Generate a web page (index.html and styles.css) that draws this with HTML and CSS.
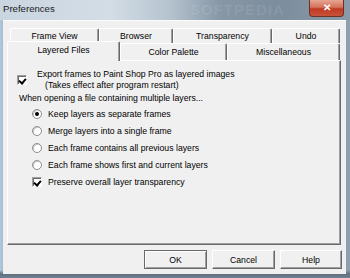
FILE: index.html
```html
<!DOCTYPE html>
<html lang="en">

<head>
	<meta charset="UTF-8">
	<title>Preferences</title>
	<link rel="stylesheet" href="styles.css">
</head>

<body>
	<div class="window">
		<div class="titlebar">
			<span class="title">Preferences</span>
			<span class="title-mark">SOFTPEDIA</span>
			<div class="close">&#x2715;</div>
		</div>
		<div class="client">
			<div class="tabs">
				<div class="tab-row back">
					<div class="tab w-frame">Frame View</div>
					<div class="tab w-browser">Browser</div>
					<div class="tab w-transp">Transparency</div>
					<div class="tab w-undo">Undo</div>
				</div>
				<div class="tab-row front">
					<div class="tab active w-layered">Layered Files</div>
					<div class="tab w-palette">Color Palette</div>
					<div class="tab w-misc">Miscellaneous</div>
				</div>
			</div>
			<div class="panel">
				<div class="export">
					<span class="check checked"></span>
					<div class="export-text">
						<div>Export frames to Paint Shop Pro as layered images</div>
						<div class="sub">(Takes effect after program restart)</div>
					</div>
				</div>
				<div class="caption">When opening a file containing multiple layers...</div>
				<div class="option"><span class="radio selected"></span>Keep layers as separate frames</div>
				<div class="option"><span class="radio"></span>Merge layers into a single frame</div>
				<div class="option"><span class="radio"></span>Each frame contains all previous layers</div>
				<div class="option"><span class="radio"></span>Each frame shows first and current layers</div>
				<div class="option"><span class="check checked"></span>Preserve overall layer transparency</div>
			</div>
			<div class="buttons">
				<div class="btn default">OK</div>
				<div class="btn">Cancel</div>
				<div class="btn narrow">Help</div>
			</div>
		</div>
	</div>
</body>

</html>
```

FILE: styles.css
```css
/* Base reset */
* {
	margin: 0;
	padding: 0;
	box-sizing: border-box;
}

body {
	width: 350px;
	height: 278px;
	overflow: hidden;
	font-family: 'Liberation Sans', Arial, sans-serif;
	font-size: 8.7px;
	color: #000;
	background: linear-gradient(90deg, #b4c8db 0, #a7bccf 3px, #7f91a2 60%, #8d9fb1 100%);
}

.window {
	height: 278px;
	padding: 0 4px 4px 3px;
	background: linear-gradient(180deg, transparent 270px, #5f6f7e 274px, #6f8090 278px);
}

/* Title bar */
.titlebar {
	position: relative;
	height: 20px;
	margin: 0 -4px 0 -3px;
	padding-left: 3px;
	display: flex;
	align-items: center;
	background: linear-gradient(90deg, #c9d5e0 0, #d3dde6 110px, #b5c3cf 170px, #8797a6 220px, #7c8d9d 280px, #8a9aa9 350px);
}

.title {
	font-size: 9.6px;
	color: #1b1b1b;
	margin-top: -3px;
}

.title-mark {
	position: absolute;
	left: 190px;
	top: 1px;
	font-size: 15px;
	font-weight: bold;
	letter-spacing: 1px;
	color: rgba(255, 255, 255, 0.09);
}

.close {
	position: absolute;
	right: 6px;
	top: 0;
	width: 35px;
	height: 17px;
	border: 1px solid #6e3128;
	border-top: none;
	border-radius: 0 0 4px 4px;
	background: linear-gradient(180deg, #e7a593 0, #d4725c 45%, #c13b22 55%, #c9523a 100%);
	color: #fff;
	font-size: 10px;
	font-weight: bold;
	text-align: center;
	line-height: 15px;
}

/* Client area */
.client {
	height: 254px;
	background: #f0f0f0;
	border-top: 1px solid #fdfdfd;
	padding: 7px 5px 0 4px;
}

.tabs {
	height: 32px;
}

.tab-row {
	display: flex;
}

.tab-row.back {
	height: 15px;
	margin-left: 3px;
}

.tab-row.front {
	height: 17px;
}

.tab {
	height: 100%;
	border-top: 1px solid #fff;
	border-left: 1px solid #fff;
	border-right: 1px solid #696969;
	border-radius: 2px 2px 0 0;
	box-shadow: inset -1px 0 #a0a0a0;
	background: #f0f0f0;
	display: flex;
	align-items: center;
	justify-content: center;
	padding-bottom: 1px;
}

.tab-row.back .tab {
	padding-top: 1px;
}

.tab.active {
	height: 20px;
	margin-top: -2px;
	position: relative;
	z-index: 1;
	padding-bottom: 3px;
}

.w-frame { width: 89px; }
.w-browser { width: 74px; }
.w-transp { width: 99px; }
.w-undo { width: 68px; }
.w-layered { width: 113px; }
.w-palette { width: 107px; }
.w-misc { width: 113px; }

.panel {
	height: 185px;
	width: 334px;
	border: 1px solid;
	border-color: #fff #696969 #696969 #fff;
	box-shadow: inset -1px -1px #a0a0a0;
	padding: 8px 0 0 9px;
}

.export {
	display: flex;
	align-items: center;
	height: 22px;
}

.export-text {
	line-height: 11px;
	margin-left: 10px;
}

.export-text .sub {
	padding-left: 8px;
}

.caption {
	height: 14px;
	line-height: 14px;
	margin-left: 2px;
}

.option {
	height: 17px;
	display: flex;
	align-items: center;
	padding-left: 15px;
}

.check,
.radio {
	flex: none;
	width: 10px;
	height: 10px;
	background: #fff;
}

.option .check,
.option .radio {
	margin-right: 6px;
}

.check {
	border: 1px solid;
	border-color: #a0a0a0 #fff #fff #a0a0a0;
	box-shadow: inset 1px 1px #696969;
	position: relative;
}

.check.checked::after {
	content: '';
	position: absolute;
	left: 2px;
	top: 1px;
	width: 3px;
	height: 5px;
	border: solid #000;
	border-width: 0 2px 2px 0;
	transform: rotate(40deg);
}

.radio {
	border-radius: 50%;
	border: 1px solid #8d8d8d;
	box-shadow: inset 1px 1px #c8c8c8;
	display: flex;
	align-items: center;
	justify-content: center;
}

.radio.selected::after {
	content: '';
	width: 4px;
	height: 4px;
	border-radius: 50%;
	background: #000;
}

/* Dialog buttons */
.buttons {
	display: flex;
	justify-content: flex-end;
	gap: 5px;
	margin: 5px -1px 0 0;
}

.btn {
	width: 63px;
	height: 19px;
	border: 1px solid;
	border-color: #fff #696969 #696969 #fff;
	box-shadow: inset -1px -1px #a0a0a0;
	background: #f0f0f0;
	display: flex;
	align-items: center;
	justify-content: center;
}

.btn.narrow {
	width: 62px;
}

.btn.default {
	outline: 1px solid #696969;
	outline-offset: -1px;
	border-color: #696969;
	box-shadow: inset 1px 1px #fff, inset -1px -1px #a0a0a0;
}
```
